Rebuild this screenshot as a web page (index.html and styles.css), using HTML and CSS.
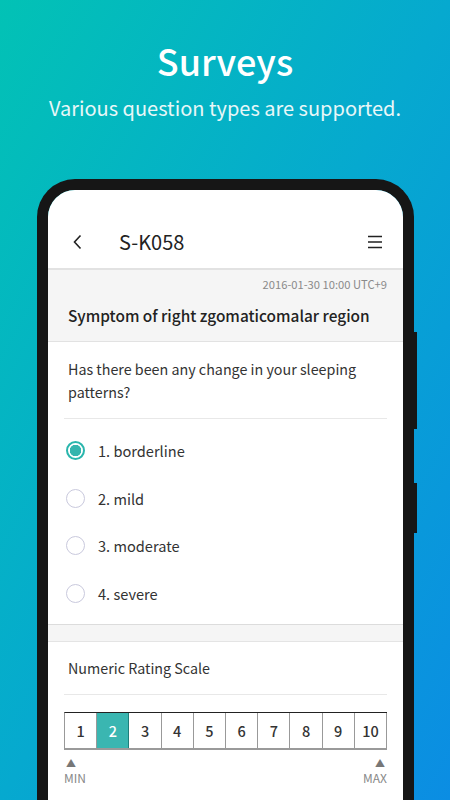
FILE: index.html
```html
<!DOCTYPE html>
<html lang="en">

<head>
    <meta charset="UTF-8">
    <title>Surveys</title>
    <link rel="stylesheet" href="styles.css">
</head>

<body>
    <div class="intro">
        <h1 class="intro-title">Surveys</h1>
        <p class="intro-text">Various question types are supported.</p>
    </div>

    <div class="phone">
        <span class="side-btn btn-a"></span>
        <span class="side-btn btn-b"></span>
        <div class="screen">
            <div class="topbar">
                <svg class="back" width="10" height="16" viewBox="0 0 10 16">
                    <polyline points="7.5,1.5 1.5,8 7.5,14.5" fill="none" stroke="#222" stroke-width="1.6"/>
                </svg>
                <span class="topbar-title">S-K058</span>
                <svg class="menu" width="14" height="14" viewBox="0 0 14 14">
                    <path d="M0 1.5h14M0 7h14M0 12.5h14" stroke="#222" stroke-width="1.4"/>
                </svg>
            </div>

            <div class="survey-head">
                <div class="stamp">2016-01-30 10:00 UTC+9</div>
                <div class="survey-title">Symptom of right zgomaticomalar region</div>
            </div>

            <div class="card">
                <div class="question">Has there been any change in your sleeping patterns?</div>
                <div class="options">
                    <div class="option"><span class="radio checked"></span>1. borderline</div>
                    <div class="option"><span class="radio"></span>2. mild</div>
                    <div class="option"><span class="radio"></span>3. moderate</div>
                    <div class="option"><span class="radio"></span>4. severe</div>
                </div>
            </div>

            <div class="gap"></div>

            <div class="card">
                <div class="question short">Numeric Rating Scale</div>
                <div class="scale">
                    <div class="cell">1</div>
                    <div class="cell on">2</div>
                    <div class="cell">3</div>
                    <div class="cell">4</div>
                    <div class="cell">5</div>
                    <div class="cell">6</div>
                    <div class="cell">7</div>
                    <div class="cell">8</div>
                    <div class="cell">9</div>
                    <div class="cell">10</div>
                </div>
                <div class="scale-ends">
                    <div class="end"><span class="tri">&#9650;</span>MIN</div>
                    <div class="end right"><span class="tri">&#9650;</span>MAX</div>
                </div>
            </div>
        </div>
    </div>
</body>

</html>
```

FILE: styles.css
```css
* {
    box-sizing: border-box;
}

html,
body {
    margin: 0;
    height: 800px;
    overflow: hidden;
}

body {
    font-family: "Noto Sans CJK KR", "Noto Sans", sans-serif;
    background: linear-gradient(to bottom right, #02c2b5 0%, #06a9cf 50%, #0b8de3 100%);
    color: #333;
}

.intro {
    text-align: center;
    color: #fff;
    padding-top: 36px;
    height: 179px;
}

.intro-title {
    margin: 0;
    font-size: 36px;
    font-weight: 500;
    line-height: 48px;
}

.intro-text {
    margin: 10px 0 0;
    font-size: 20px;
    font-weight: 400;
    line-height: 28px;
    color: #e8f7f8;
}

.phone {
    position: relative;
    margin: 0 36px 0 37px;
    height: 700px;
    border: 11px solid #161616;
    border-bottom: none;
    border-radius: 38px 38px 0 0;
}

.side-btn {
    position: absolute;
    right: -14px;
    width: 3px;
    background: #161616;
}

.btn-a {
    top: 142px;
    height: 97px;
}

.btn-b {
    top: 293px;
    height: 50px;
}

.screen {
    background: #fff;
    height: 100%;
    border-radius: 27px 27px 0 0;
    overflow: hidden;
}

.topbar {
    display: flex;
    align-items: center;
    height: 80px;
    padding: 38px 21px 13px 25px;
    border-bottom: 2px solid #e2e2e2;
}

.back {
    display: block;
}

.topbar-title {
    margin-left: 36px;
    font-size: 20px;
    line-height: 28px;
    color: #222;
    flex: 1;
}

.menu {
    display: block;
}

.survey-head {
    background: #f5f5f5;
    padding: 6px 16px 14px 20px;
    border-bottom: 1px solid #e2e2e2;
}

.stamp {
    text-align: right;
    font-size: 11.2px;
    line-height: 16px;
    color: #8a8a8a;
}

.survey-title {
    margin-top: 11px;
    font-size: 15.4px;
    font-weight: 500;
    line-height: 24px;
    color: #222;
    white-space: nowrap;
}

.card {
    padding: 0 16px;
    background: #fff;
}

.question {
    padding: 15px 4px 15px;
    font-size: 14.3px;
    line-height: 23px;
    color: #333;
    border-bottom: 1px solid #e8e8e8;
}

.question.short {
    padding: 14px 4px 15px;
}

.options {
    padding: 8px 0 7px;
}

.option {
    display: flex;
    align-items: center;
    height: 47.5px;
    font-size: 14.6px;
    color: #333;
}

.radio {
    width: 19px;
    height: 19px;
    margin: 0 13px 0 2px;
    border: 1.5px solid #c9c9dd;
    border-radius: 50%;
}

.radio.checked {
    border: 2px solid #2ab6ad;
    background: radial-gradient(circle, #35b5ae 0 5.5px, #fff 6px);
}

.gap {
    height: 18px;
    background: #f5f5f5;
    border-top: 1px solid #dcdcdc;
    border-bottom: 1px solid #e4e4e4;
}

.scale {
    display: flex;
    margin-top: 17px;
    border-top: 1px solid #222;
    border-bottom: 2px solid #9a9a9a;
    border-left: 1px solid #999;
}

.cell {
    flex: 1;
    height: 35px;
    line-height: 35px;
    text-align: center;
    font-size: 14.5px;
    font-weight: 500;
    color: #333;
    border-right: 1px solid #999;
}

.cell.on {
    background: #3ab6b1;
    color: #fff;
    border-right-color: #1e7e7a;
}

.scale-ends {
    display: flex;
    justify-content: space-between;
    padding-top: 6px;
}

.end {
    display: flex;
    flex-direction: column;
    align-items: flex-start;
    font-size: 12px;
    line-height: 16px;
    color: #888;
}

.end.right {
    align-items: flex-end;
}

.tri {
    font-size: 10px;
    line-height: 14px;
    color: #777;
    padding: 0 2px;
}
```
